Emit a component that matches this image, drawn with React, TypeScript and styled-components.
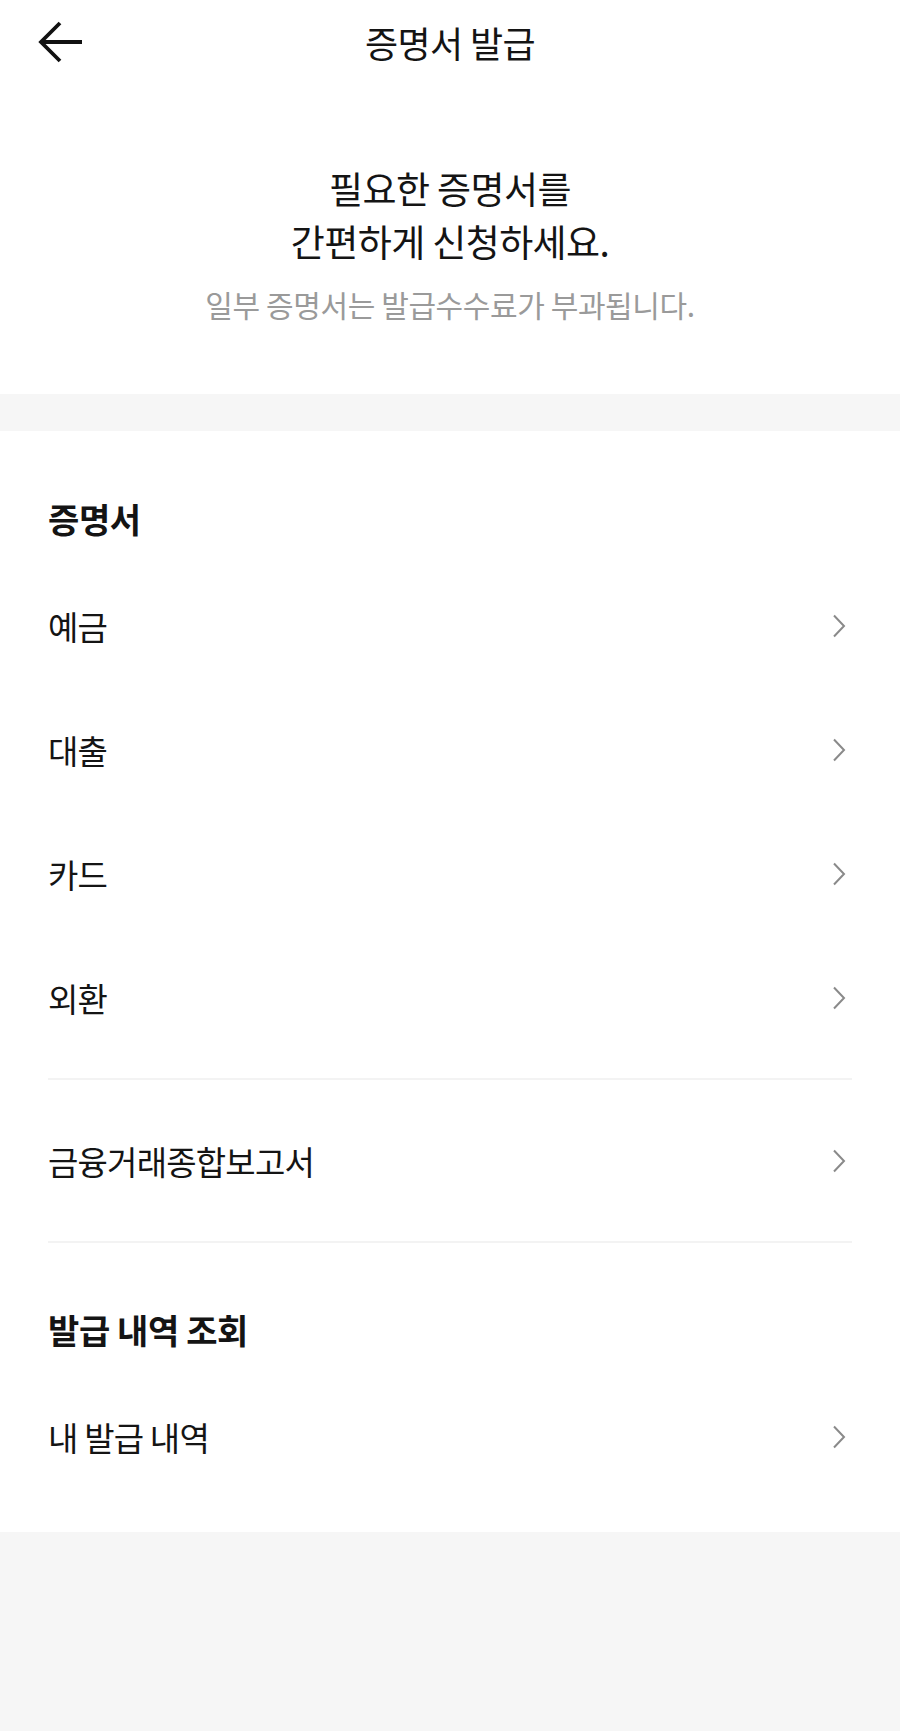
import React from "react";
import styled, { createGlobalStyle } from "styled-components";

const Global = createGlobalStyle`
  html, body { margin: 0; padding: 0; background: #f6f6f6; }
  body { font-family: "Noto Sans CJK KR", "Noto Sans", sans-serif; color: #141414; }
  * { box-sizing: border-box; }
`;

const Page = styled.div`
  width: 900px;
  min-height: 1731px;
  background: #f6f6f6;
  display: flex;
  flex-direction: column;
`;

const Top = styled.div`
  background: #ffffff;
`;

const Header = styled.header`
  height: 84px;
  display: grid;
  grid-template-columns: 120px 1fr 120px;
  align-items: center;
`;

const BackButton = styled.button`
  border: 0;
  background: none;
  padding: 0 0 0 37px;
  height: 84px;
  display: flex;
  align-items: center;
  cursor: pointer;
`;

const Title = styled.h1`
  margin: 0;
  text-align: center;
  font-size: 36px;
  font-weight: 400;
  line-height: 44px;
  letter-spacing: -0.6px;
  color: #141414;
`;

const Hero = styled.section`
  padding: 78px 0 70px;
  display: flex;
  flex-direction: column;
  align-items: center;
`;

const HeroLine = styled.p`
  margin: 0;
  font-size: 37px;
  line-height: 53px;
  letter-spacing: -0.6px;
  color: #141414;
`;

const HeroNote = styled.p`
  margin: 16px 0 0;
  font-size: 30px;
  line-height: 40px;
  letter-spacing: -0.4px;
  color: #9a9a9a;
`;

const Band = styled.div`
  height: 37px;
  background: #f6f6f6;
`;

const Menu = styled.section`
  background: #ffffff;
  padding: 68px 0 33px;
  display: flex;
  flex-direction: column;
`;

const SectionTitle = styled.h2<{ $gap?: number }>`
  margin: ${(p) => p.$gap ?? 0}px 0 25px;
  padding: 0 48px;
  font-size: 34px;
  font-weight: 700;
  line-height: 40px;
  letter-spacing: -0.4px;
  color: #141414;
`;

const Row = styled.button`
  height: 124px;
  width: 100%;
  border: 0;
  background: none;
  padding: 0 54px 0 48px;
  display: flex;
  align-items: center;
  justify-content: space-between;
  font-family: inherit;
  cursor: pointer;
`;

const RowLabel = styled.span`
  font-size: 33px;
  line-height: 40px;
  letter-spacing: -0.8px;
  color: #141414;
`;

const Divider = styled.hr`
  border: 0;
  height: 2px;
  background: #f3f3f3;
  margin: 18px 48px 19px;
`;

const BackArrow = () => (
  <svg width="47" height="42" viewBox="0 0 47 42" fill="none">
    <path d="M45 21H4" stroke="#111" strokeWidth="3.8" strokeLinecap="butt" />
    <path d="M23 2L4 21L23 40" stroke="#111" strokeWidth="3.8" strokeLinecap="butt" strokeLinejoin="miter" />
  </svg>
);

const Chevron = () => (
  <svg width="14" height="24" viewBox="0 0 14 24" fill="none">
    <path d="M2 1.5L12 12L2 22.5" stroke="#8a8a8a" strokeWidth="2" />
  </svg>
);

const certItems = ["예금", "대출", "카드", "외환"];

export default function App() {
  return (
    <Page>
      <Global />
      <Top>
        <Header>
          <BackButton aria-label="뒤로">
            <BackArrow />
          </BackButton>
          <Title>증명서 발급</Title>
          <span />
        </Header>
        <Hero>
          <HeroLine>필요한 증명서를</HeroLine>
          <HeroLine>간편하게 신청하세요.</HeroLine>
          <HeroNote>일부 증명서는 발급수수료가 부과됩니다.</HeroNote>
        </Hero>
      </Top>
      <Band />
      <Menu>
        <SectionTitle>증명서</SectionTitle>
        {certItems.map((label) => (
          <Row key={label}>
            <RowLabel>{label}</RowLabel>
            <Chevron />
          </Row>
        ))}
        <Divider />
        <Row>
          <RowLabel>금융거래종합보고서</RowLabel>
          <Chevron />
        </Row>
        <Divider />
        <SectionTitle $gap={48}>발급 내역 조회</SectionTitle>
        <Row>
          <RowLabel>내 발급 내역</RowLabel>
          <Chevron />
        </Row>
      </Menu>
    </Page>
  );
}
